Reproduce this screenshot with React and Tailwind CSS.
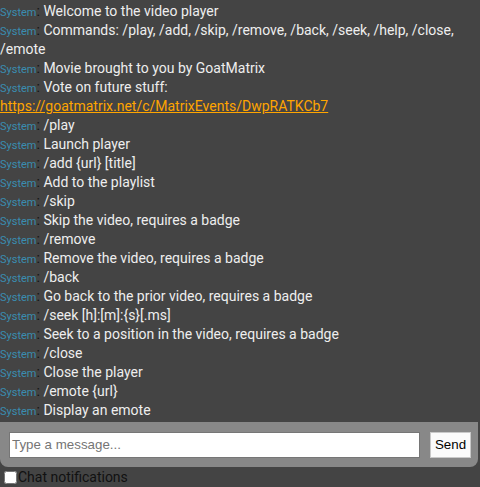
import React from "react";

const messages = [
  "Welcome to the video player",
  "Commands: /play, /add, /skip, /remove, /back, /seek, /help, /close, /emote",
  "Movie brought to you by GoatMatrix",
  "link",
  "/play",
  "Launch player",
  "/add {url} [title]",
  "Add to the playlist",
  "/skip",
  "Skip the video, requires a badge",
  "/remove",
  "Remove the video, requires a badge",
  "/back",
  "Go back to the prior video, requires a badge",
  "/seek [h]:[m]:{s}[.ms]",
  "Seek to a position in the video, requires a badge",
  "/close",
  "Close the player",
  "/emote {url}",
  "Display an emote",
];

const Message = ({ children }) => (
  <div className="text-[14px] leading-[19px]">
    <span className="text-[11px] leading-none text-[#3a8db0]">System</span>
    <span className="text-[#111]">: </span>
    {children}
  </div>
);

const App = () => {
  return (
    <div
      className="h-[487px] w-[480px] bg-[#444444] flex flex-col overflow-hidden text-[#111]"
      style={{ fontFamily: "Roboto, sans-serif" }}
    >
      <div className="flex-1 min-h-0 pt-[2px]">
        {messages.map((m, i) =>
          m === "link" ? (
            <Message key={i}>
              <span className="text-[#eeeeee]">Vote on future stuff: </span>
              <a className="text-[#ffa500] underline" href="#">
                https://goatmatrix.net/c/MatrixEvents/DwpRATKCb7
              </a>
            </Message>
          ) : (
            <Message key={i}>
              <span className="text-[#eeeeee]">{m}</span>
            </Message>
          )
        )}
      </div>
      <div className="mr-[2px] bg-[#888888] rounded-b-lg flex items-center gap-[10px] pl-[9px] pr-[7px] h-[45px] shrink-0">
        <input
          className="flex-1 h-[26px] bg-white border border-[#767676] px-[2px] text-[13.33px] text-black placeholder:text-[#757575] outline-none"
          style={{ fontFamily: "'Liberation Sans', Arial, sans-serif" }}
          placeholder="Type a message..."
        />
        <button
          className="h-[26px] w-[41px] bg-[#fafafa] border border-[#c8c8c8] text-[13.33px] text-black"
          style={{ fontFamily: "'Liberation Sans', Arial, sans-serif" }}
        >
          Send
        </button>
      </div>
      <label className="flex items-center h-[20px] shrink-0 text-[14px] leading-[20px]">
        <input type="checkbox" className="ml-[4px] mr-[1px] w-[13px] h-[13px]" />
        Chat notifications
      </label>
    </div>
  );
};

export default App;
